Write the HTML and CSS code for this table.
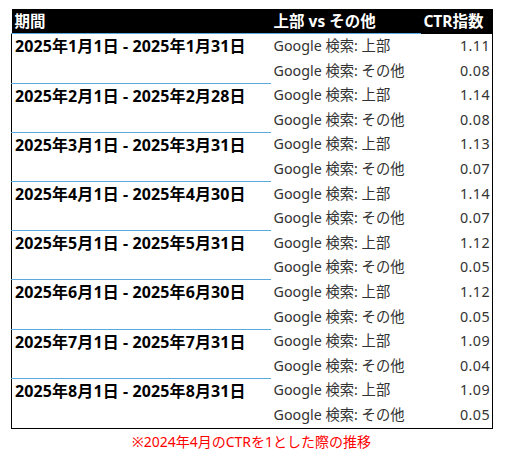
FILE: index.html
```html
<!DOCTYPE html>
<html lang="ja">
<head>
<meta charset="utf-8">
<link rel="stylesheet" href="styles.css">
</head>
<body>
<div class="wrap">
<table class="ctr">
  <thead>
    <tr><th class="c1">期間</th><th class="c2">上部 vs その他</th><th class="c3">CTR指数</th></tr>
  </thead>
  <tbody>
    <tr class="gtop"><td class="period" rowspan="2">2025年1月1日 - 2025年1月31日</td><td class="lbl">Google 検索: 上部</td><td class="num">1.11</td></tr>
    <tr><td class="lbl">Google 検索: その他</td><td class="num">0.08</td></tr>
    <tr class="gtop"><td class="period" rowspan="2">2025年2月1日 - 2025年2月28日</td><td class="lbl">Google 検索: 上部</td><td class="num">1.14</td></tr>
    <tr><td class="lbl">Google 検索: その他</td><td class="num">0.08</td></tr>
    <tr class="gtop"><td class="period" rowspan="2">2025年3月1日 - 2025年3月31日</td><td class="lbl">Google 検索: 上部</td><td class="num">1.13</td></tr>
    <tr><td class="lbl">Google 検索: その他</td><td class="num">0.07</td></tr>
    <tr class="gtop"><td class="period" rowspan="2">2025年4月1日 - 2025年4月30日</td><td class="lbl">Google 検索: 上部</td><td class="num">1.14</td></tr>
    <tr><td class="lbl">Google 検索: その他</td><td class="num">0.07</td></tr>
    <tr class="gtop"><td class="period" rowspan="2">2025年5月1日 - 2025年5月31日</td><td class="lbl">Google 検索: 上部</td><td class="num">1.12</td></tr>
    <tr><td class="lbl">Google 検索: その他</td><td class="num">0.05</td></tr>
    <tr class="gtop"><td class="period" rowspan="2">2025年6月1日 - 2025年6月30日</td><td class="lbl">Google 検索: 上部</td><td class="num">1.12</td></tr>
    <tr><td class="lbl">Google 検索: その他</td><td class="num">0.05</td></tr>
    <tr class="gtop"><td class="period" rowspan="2">2025年7月1日 - 2025年7月31日</td><td class="lbl">Google 検索: 上部</td><td class="num">1.09</td></tr>
    <tr><td class="lbl">Google 検索: その他</td><td class="num">0.04</td></tr>
    <tr class="gtop"><td class="period" rowspan="2">2025年8月1日 - 2025年8月31日</td><td class="lbl">Google 検索: 上部</td><td class="num">1.09</td></tr>
    <tr><td class="lbl">Google 検索: その他</td><td class="num">0.05</td></tr>
  </tbody>
</table>
<p class="note">※2024年4月のCTRを1とした際の推移</p>
</div>
</body>
</html>
```

FILE: styles.css
```css
html, body {
  margin: 0;
  padding: 0;
  background: #ffffff;
}
body {
  font-family: "Noto Sans", "Noto Sans CJK JP", sans-serif;
}
.wrap {
  padding: 9px 0 0 11px;
  width: 481px;
}
.ctr {
  border-collapse: collapse;
  table-layout: fixed;
  width: 481px;
}
.ctr th {
  background: #000000;
  color: #ffffff;
  font-weight: bold;
  font-size: 15.5px;
  height: 24px;
  padding: 0;
  line-height: 24px;
  text-align: left;
  border-bottom: 1px solid #5aa9dd;
}
.ctr th.c1 { width: 259px; padding-left: 3px; box-sizing: border-box; }
.ctr th.c2 { width: 150px; padding-left: 3px; box-sizing: border-box; }
.ctr th.c3 { width: 72px; text-align: right; padding-right: 9px; box-sizing: border-box; border-bottom-color: #000; }
.ctr tbody {
  border: 1px solid #000000;
  border-top: none;
}
.ctr td {
  padding: 0;
  height: 24.6px;
  line-height: 24.6px;
  font-size: 14.3px;
  color: #333333;
}
.ctr td.period {
  vertical-align: top;
  font-weight: bold;
  font-size: 16px;
  color: #000000;
  padding-left: 3px;
  letter-spacing: 0.1px;
  white-space: nowrap;
}
.ctr tr.gtop td.period {
  border-top: 1px solid #5aa9dd;
}
.ctr tbody tr:first-child td.period {
  border-top: none;
}
.ctr td.lbl {
  padding-left: 3px;
  white-space: nowrap;
}
.ctr td.num {
  text-align: right;
  padding-right: 2px;
  letter-spacing: 0.4px;
}
.note {
  margin: 0;
  padding-top: 3px;
  text-align: center;
  color: #ff0000;
  font-size: 14px;
  line-height: 20px;
}
```
